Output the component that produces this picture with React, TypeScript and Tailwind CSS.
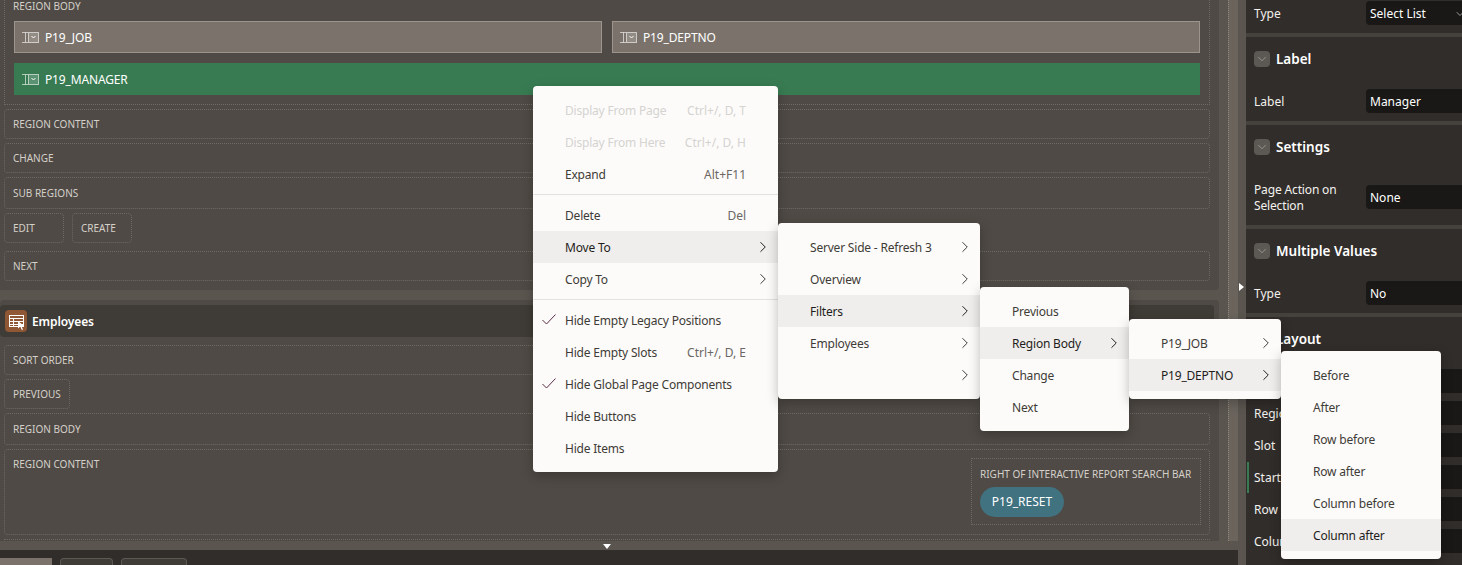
import { ChevronRight, ChevronDown } from "lucide-react";

function Slot({ label, className = "" }: { label: string; className?: string }) {
  return (
    <div className={`border border-dotted border-[#6f6a64] rounded-sm px-2 flex items-center text-[10px] uppercase text-[#d4d0ca] ${className}`}>
      {label}
    </div>
  );
}

function SelectIcon() {
  return (
    <svg width="17" height="11" viewBox="0 0 17 11" fill="none" className="shrink-0">
      <path d="M0 .5H6M0 10.5H6M3.5 .5V10.5" stroke="currentColor" strokeWidth="1" opacity="0.6" />
      <rect x="6.5" y=".5" width="10" height="10" fill="currentColor" fillOpacity="0.18" stroke="currentColor" strokeOpacity="0.6" />
      <path d="M9.5 4l2 2 2-2" stroke="currentColor" strokeWidth="1" />
    </svg>
  );
}

function PageItem({ label, green }: { label: string; green?: boolean }) {
  return (
    <div className={`flex-1 h-8 flex items-center gap-[6px] text-[12px] tracking-[-0.15px] text-white ${green ? "bg-[#387b52] pl-[8px]" : "bg-[#7b736b] border border-[#9a948d] pl-[7px]"}`}>
      <SelectIcon />
      <span className="pt-px">{label}</span>
    </div>
  );
}

function ReportIcon() {
  return (
    <div className="relative w-[22px] h-[22px] rounded-sm bg-[#8f5733] flex items-center justify-center">
      <svg width="17" height="14" viewBox="0 0 17 14" fill="none" stroke="white" strokeWidth="1">
        <rect x="1.5" y="1.5" width="14" height="11" />
        <path d="M1.5 4.5H15.5M1.5 7.5H15.5M1.5 10.5H15.5M5.5 4.5V12.5" />
      </svg>
      <svg width="7" height="9" viewBox="0 0 7 9" className="absolute right-[2px] bottom-[2px]">
        <path d="M0 0L6 5H3.5L5 8.5L3.8 9L2.3 5.5L0 7.5Z" fill="white" />
      </svg>
    </div>
  );
}

function Section({ title }: { title: string }) {
  return (
    <div className="h-[56px] shrink-0 flex items-start gap-[6px] px-2 pt-[14px] border-t-4 border-[#45413c]">
      <div className="w-4 h-4 rounded-sm bg-[#5c5853] flex items-center justify-center">
        <ChevronDown size={14} strokeWidth={1.5} className="text-[#a09b95]" />
      </div>
      <span className="text-[13.5px] leading-4 font-semibold text-white">{title}</span>
    </div>
  );
}

function Field({ label, value, select }: { label: string; value?: string; select?: boolean }) {
  return (
    <div className="h-8 shrink-0 flex items-start pl-2 text-[12px] text-[#f3f1ee]">
      <span className="w-28 shrink-0 leading-6 pt-px">{label}</span>
      <div className="flex-1 h-6 bg-[#191816] rounded-l-sm flex items-center justify-between pl-1 pt-px text-white">
        {value}
        {select && <ChevronDown size={12} className="text-[#999] -mr-1" />}
      </div>
    </div>
  );
}

type Item = { label?: string; keys?: string; muted?: boolean; arrow?: boolean; active?: boolean; check?: boolean; sep?: boolean };

function Menu({ items, pos }: { items: Item[]; pos: string }) {
  return (
    <div className={`absolute ${pos} bg-[#fcfbfa] rounded-[4px] py-2 shadow-[0_4px_12px_rgba(0,0,0,0.25)] text-[12px] text-[#3f3b36]`}>
      {items.map((it, i) =>
        it.sep ? (
          <div key={i} className="my-1 border-t border-[#e4e2df]" />
        ) : (
          <div key={i} className={`h-8 flex items-center justify-between pl-8 pr-[13px] relative ${it.active ? "bg-[#efeeec] text-[#1f1d1b]" : ""} ${it.muted ? "text-[#d5d3d0]" : ""}`}>
            {it.check && (
              <svg width="15" height="11" viewBox="0 0 15 11" fill="none" stroke="#5a2a45" className="absolute left-[9px] top-[10px]">
                <path d="M.5 6l4 4 9-9.5" />
              </svg>
            )}
            <span className="pt-[1px] tracking-[-0.2px]">{it.label}</span>
            {it.keys && <span className={`mr-[19px] pt-[1px] ${it.muted ? "" : "text-[#6b6762]"}`}>{it.keys}</span>}
            {it.arrow && <ChevronRight size={18} strokeWidth={1.33} className="-mr-[7px] ml-auto" />}
          </div>
        )
      )}
    </div>
  );
}

export default function App() {
  return (
    <div className="relative h-[565px] w-[1462px] overflow-hidden flex bg-[#5a554f] font-['Noto_Sans','Open_Sans',sans-serif]">
      <div className="w-[1238px] shrink-0 flex flex-col">
        <div className="h-[541px] shrink-0 flex">
          <div className="w-[1228px] shrink-0 pr-[9px] flex flex-col gap-[10px] overflow-hidden">
            <div className="h-[290px] shrink-0 bg-[#4f4a45] rounded-br-sm pl-1 pr-[9px] flex flex-col gap-[4px]">
              <div className="h-[105px] border border-t-0 border-dotted border-[#6f6a64] px-[9px] shrink-0">
                <div className="h-[15px] -ml-px text-[10px] text-[#d4d0ca] leading-[13px]">REGION BODY</div>
                <div className="mt-[6px] flex gap-[10px]">
                  <PageItem label="P19_JOB" />
                  <PageItem label="P19_DEPTNO" />
                </div>
                <div className="mt-[10px] flex">
                  <PageItem label="P19_MANAGER" green />
                </div>
              </div>
              <Slot label="Region Content" className="h-[30px] shrink-0" />
              <Slot label="Change" className="h-[30px] shrink-0" />
              <Slot label="Sub Regions" className="h-[32px] shrink-0" />
              <div className="flex gap-2 shrink-0">
                <Slot label="Edit" className="h-[30px] w-[60px]" />
                <Slot label="Create" className="h-[30px] w-[60px]" />
              </div>
              <Slot label="Next" className="h-[30px] mt-1 shrink-0" />
            </div>
            <div className="flex-1 bg-[#4f4a45] rounded-t-sm pt-[5px] flex flex-col">
              <div className="h-8 shrink-0 mr-[5px] bg-[#3f3b36] rounded-sm flex items-center gap-[5px] pl-[5px] text-[12px] font-semibold tracking-[-0.1px] text-white">
                <ReportIcon />
                <span className="pt-[2px]">Employees</span>
              </div>
              <div className="pl-1 pr-[9px] pt-2 flex flex-col gap-[4px]">
                <Slot label="Sort Order" className="h-[30px]" />
                <Slot label="Previous" className="h-[30px] w-[66px]" />
                <Slot label="Region Body" className="h-[32px]" />
                <div className="h-[86px] border border-dotted border-[#6f6a64] rounded-sm pt-2 pl-2 pr-2 flex justify-between">
                  <span className="text-[10px] text-[#d4d0ca] leading-[14px] -mt-px">REGION CONTENT</span>
                  <div className="w-[230px] h-[67px] border border-dotted border-[#6f6a64] pl-2 pt-2">
                    <div className="text-[10px] text-[#d4d0ca] leading-[14px]">RIGHT OF INTERACTIVE REPORT SEARCH BAR</div>
                    <div className="mt-[6px] w-[84px] h-[30px] rounded-full bg-[#40727f] flex items-center justify-center text-[12px] text-white">P19_RESET</div>
                  </div>
                </div>
                <div className="h-3 border-t border-dotted border-[#6f6a64]" />
              </div>
            </div>
          </div>
          <div className="flex-1 bg-[#6a645d] border-l border-dotted border-[#8b867f]" />
        </div>
        <div className="h-[9px] shrink-0" />
        <div className="h-[15px] shrink-0 bg-[#312d2a] flex items-end gap-2">
          <div className="w-[52px] h-[7px] bg-[#7b736b]" />
          <div className="w-[53px] h-[7px] bg-[#3f3b36] border border-b-0 border-[#5c5853] rounded-t-sm" />
          <div className="w-[66px] h-[7px] bg-[#3f3b36] border border-b-0 border-[#5c5853] rounded-t-sm" />
        </div>
      </div>
      <div className="w-2 shrink-0" />
      <div className="flex-1 bg-[#312d2a] flex flex-col pt-px overflow-hidden">
        <Field label="Type" value="Select List" select />
        <Section title="Label" />
        <Field label="Label" value="Manager" />
        <Section title="Settings" />
        <div className="h-12 shrink-0 flex items-start pl-2 text-[12px] text-[#f3f1ee]">
          <span className="w-28 shrink-0 leading-4 mt-[5px] tracking-[-0.15px]">Page Action on Selection</span>
          <div className="mt-2 flex-1 h-6 bg-[#191816] rounded-l-sm flex items-center pl-1 pt-px text-white">None</div>
        </div>
        <Section title="Multiple Values" />
        <Field label="Type" value="No" />
        <Section title="Layout" />
        <Field label="" value="" />
        <Field label="Region" value="" select />
        <Field label="Slot" value="" />
        <div className="relative">
          <div className="absolute left-px -top-[3px] w-[2px] h-[31px] bg-[#387b52]" />
          <Field label="Start New" value="" />
        </div>
        <Field label="Row CSS" value="" />
        <Field label="Column" value="" />
      </div>

      <div className="absolute left-[1239px] top-[283px] w-0 h-0 border-y-[4px] border-y-transparent border-l-[5px] border-l-white" />
      <div className="absolute left-[603px] top-[544px] w-0 h-0 border-x-[4px] border-x-transparent border-t-[5px] border-t-white" />

      <Menu
        pos="left-[533px] top-[86px] w-[245px]"
        items={[
          { label: "Display From Page", keys: "Ctrl+/, D, T", muted: true },
          { label: "Display From Here", keys: "Ctrl+/, D, H", muted: true },
          { label: "Expand", keys: "Alt+F11" },
          { sep: true },
          { label: "Delete", keys: "Del" },
          { label: "Move To", arrow: true, active: true },
          { label: "Copy To", arrow: true },
          { sep: true },
          { label: "Hide Empty Legacy Positions", check: true },
          { label: "Hide Empty Slots", keys: "Ctrl+/, D, E" },
          { label: "Hide Global Page Components", check: true },
          { label: "Hide Buttons" },
          { label: "Hide Items" },
        ]}
      />
      <Menu
        pos="left-[778px] top-[223px] w-[202px]"
        items={[
          { label: "Server Side - Refresh 3", arrow: true },
          { label: "Overview", arrow: true },
          { label: "Filters", arrow: true, active: true },
          { label: "Employees", arrow: true },
          { label: "", arrow: true },
        ]}
      />
      <Menu
        pos="left-[980px] top-[287px] w-[149px]"
        items={[
          { label: "Previous" },
          { label: "Region Body", arrow: true, active: true },
          { label: "Change" },
          { label: "Next" },
        ]}
      />
      <Menu
        pos="left-[1129px] top-[319px] w-[152px]"
        items={[
          { label: "P19_JOB", arrow: true },
          { label: "P19_DEPTNO", arrow: true, active: true },
        ]}
      />
      <Menu
        pos="left-[1281px] top-[351px] w-[160px]"
        items={[
          { label: "Before" },
          { label: "After" },
          { label: "Row before" },
          { label: "Row after" },
          { label: "Column before" },
          { label: "Column after", active: true },
        ]}
      />
    </div>
  );
}
